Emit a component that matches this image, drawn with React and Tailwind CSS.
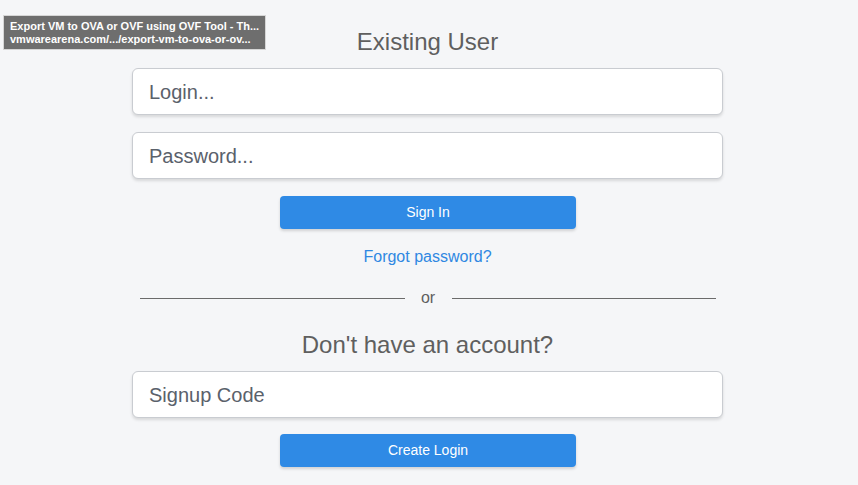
import React from "react";

export default function App() {
  const font = { fontFamily: '"Liberation Sans", Arial, Helvetica, sans-serif' };
  return (
    <div className="relative w-[858px] h-[485px] overflow-hidden bg-[#f5f6f8]" style={font}>
      <div className="w-[591px] ml-[132px] flex flex-col">
        <h1 className="mt-[28px] h-[28px] leading-[28px] text-[24px] text-[#5f5f5f] text-center font-normal">
          Existing User
        </h1>
        <div className="mt-[12px] h-[47px] rounded-[6px] border border-[#c9ccd1] bg-white shadow-[0_2px_3px_rgba(0,0,0,0.12)] flex items-center px-[16px] text-[20px] text-[#5a616b]">
          Login...
        </div>
        <div className="mt-[17px] h-[47px] rounded-[6px] border border-[#c9ccd1] bg-white shadow-[0_2px_3px_rgba(0,0,0,0.12)] flex items-center px-[16px] text-[20px] text-[#5a616b]">
          Password...
        </div>
        <button className="mt-[17px] self-center ml-[1px] w-[296px] h-[33px] rounded-[4px] bg-[#2f8ae5] text-white text-[14px] shadow-[0_2px_3px_rgba(0,0,0,0.15)]">
          Sign In
        </button>
        <div className="mt-[18px] h-[20px] leading-[20px] text-center text-[16px] text-[#2f88e2]">
          Forgot password?
        </div>
        <div className="mt-[21px] h-[20px] flex items-center pl-[8px] pr-[7px]">
          <div className="flex-1 h-px bg-[#6b6b6b]" />
          <span className="w-[47px] text-center text-[16px] text-[#5f5f5f] leading-[20px]">or</span>
          <div className="flex-1 h-px bg-[#6b6b6b]" />
        </div>
        <h2 className="mt-[23px] h-[28px] leading-[28px] text-[24px] text-[#5f5f5f] text-center font-normal">
          Don't have an account?
        </h2>
        <div className="mt-[12px] h-[47px] rounded-[6px] border border-[#c9ccd1] bg-white shadow-[0_2px_3px_rgba(0,0,0,0.12)] flex items-center px-[16px] text-[20px] text-[#5a616b]">
          Signup Code
        </div>
        <button className="mt-[16px] self-center ml-[1px] w-[296px] h-[33px] rounded-[4px] bg-[#2f8ae5] text-white text-[14px] shadow-[0_2px_3px_rgba(0,0,0,0.15)]">
          Create Login
        </button>
      </div>
      <div className="absolute left-[3px] top-[15px] w-[263px] h-[35px] bg-[#6e6e6e] border border-[#d6d6d6] px-[6px] pt-[4px] text-white text-[11px] leading-[13px] font-semibold">
        <div className="whitespace-nowrap">Export VM to OVA or OVF using OVF Tool - Th...</div>
        <div className="whitespace-nowrap">vmwarearena.com/.../export-vm-to-ova-or-ov...</div>
      </div>
    </div>
  );
}
